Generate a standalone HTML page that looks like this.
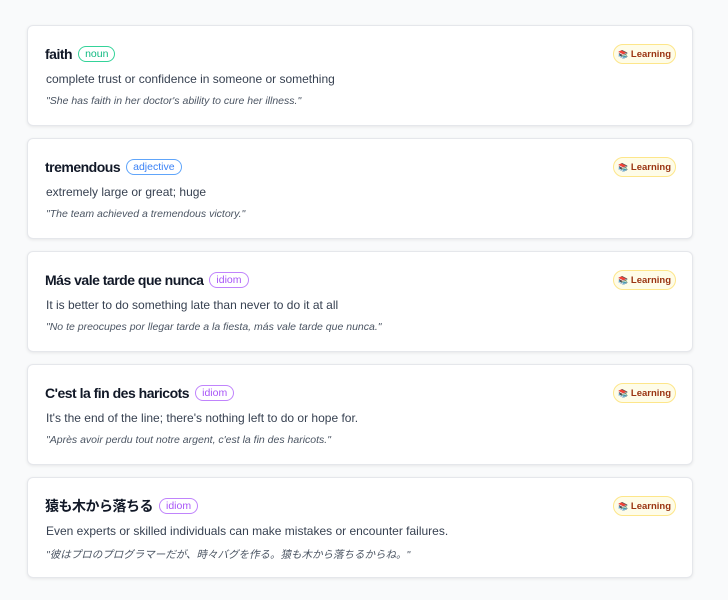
<!DOCTYPE html>
<html><head><meta charset="utf-8"><style>
body{margin:0;background:#f9fafb;font-family:"Liberation Sans","Noto Sans CJK JP",sans-serif;width:728px;height:600px;overflow:hidden;position:relative}
.card{position:absolute;left:27px;width:664px;height:99px;background:#fff;border:1px solid #e5e7eb;border-radius:6px;box-shadow:0 1px 3px rgba(0,0,0,.08)}
.t{position:absolute;left:17px;top:19px;height:18px;font-size:14px;font-weight:600;color:#111827;display:flex;align-items:center;letter-spacing:-.5px}
.b{margin-left:6px;font-size:10.5px;font-weight:500;border:1px solid;border-radius:9px;padding:1px 6px;letter-spacing:0}
.g{color:#10b981;border-color:#34d399}.bl{color:#3b82f6;border-color:#60a5fa}.p{color:#a855f7;border-color:#c084fc}
.d{position:absolute;left:18px;top:46px;font-size:12px;color:#374151}
.e{position:absolute;left:18px;top:69px;font-size:10.5px;font-style:italic;color:#4b5563}
.l{position:absolute;left:585px;top:18px;width:63px;height:20px;box-sizing:border-box;border:1px solid #fde68a;background:#fefce8;border-radius:10px;font-size:9.5px;color:#9a3412;font-weight:600;display:flex;align-items:center;justify-content:center;gap:3px}
.l span{font-size:8px}
</style></head><body>
<div class="card" style="top:25px"><div class="t">faith<span class="b g">noun</span></div><div class="d">complete trust or confidence in someone or something</div><div class="e">"She has faith in her doctor's ability to cure her illness."</div><div class="l"><span>📚</span>Learning</div></div>
<div class="card" style="top:138px"><div class="t">tremendous<span class="b bl">adjective</span></div><div class="d">extremely large or great; huge</div><div class="e">"The team achieved a tremendous victory."</div><div class="l"><span>📚</span>Learning</div></div>
<div class="card" style="top:251px"><div class="t">Más vale tarde que nunca<span class="b p">idiom</span></div><div class="d">It is better to do something late than never to do it at all</div><div class="e">"No te preocupes por llegar tarde a la fiesta, más vale tarde que nunca."</div><div class="l"><span>📚</span>Learning</div></div>
<div class="card" style="top:364px"><div class="t">C'est la fin des haricots<span class="b p">idiom</span></div><div class="d">It's the end of the line; there's nothing left to do or hope for.</div><div class="e">"Après avoir perdu tout notre argent, c'est la fin des haricots."</div><div class="l"><span>📚</span>Learning</div></div>
<div class="card" style="top:477px"><div class="t">猿も木から落ちる<span class="b p">idiom</span></div><div class="d">Even experts or skilled individuals can make mistakes or encounter failures.</div><div class="e">"彼はプロのプログラマーだが、時々バグを作る。猿も木から落ちるからね。"</div><div class="l"><span>📚</span>Learning</div></div>
</body></html>
